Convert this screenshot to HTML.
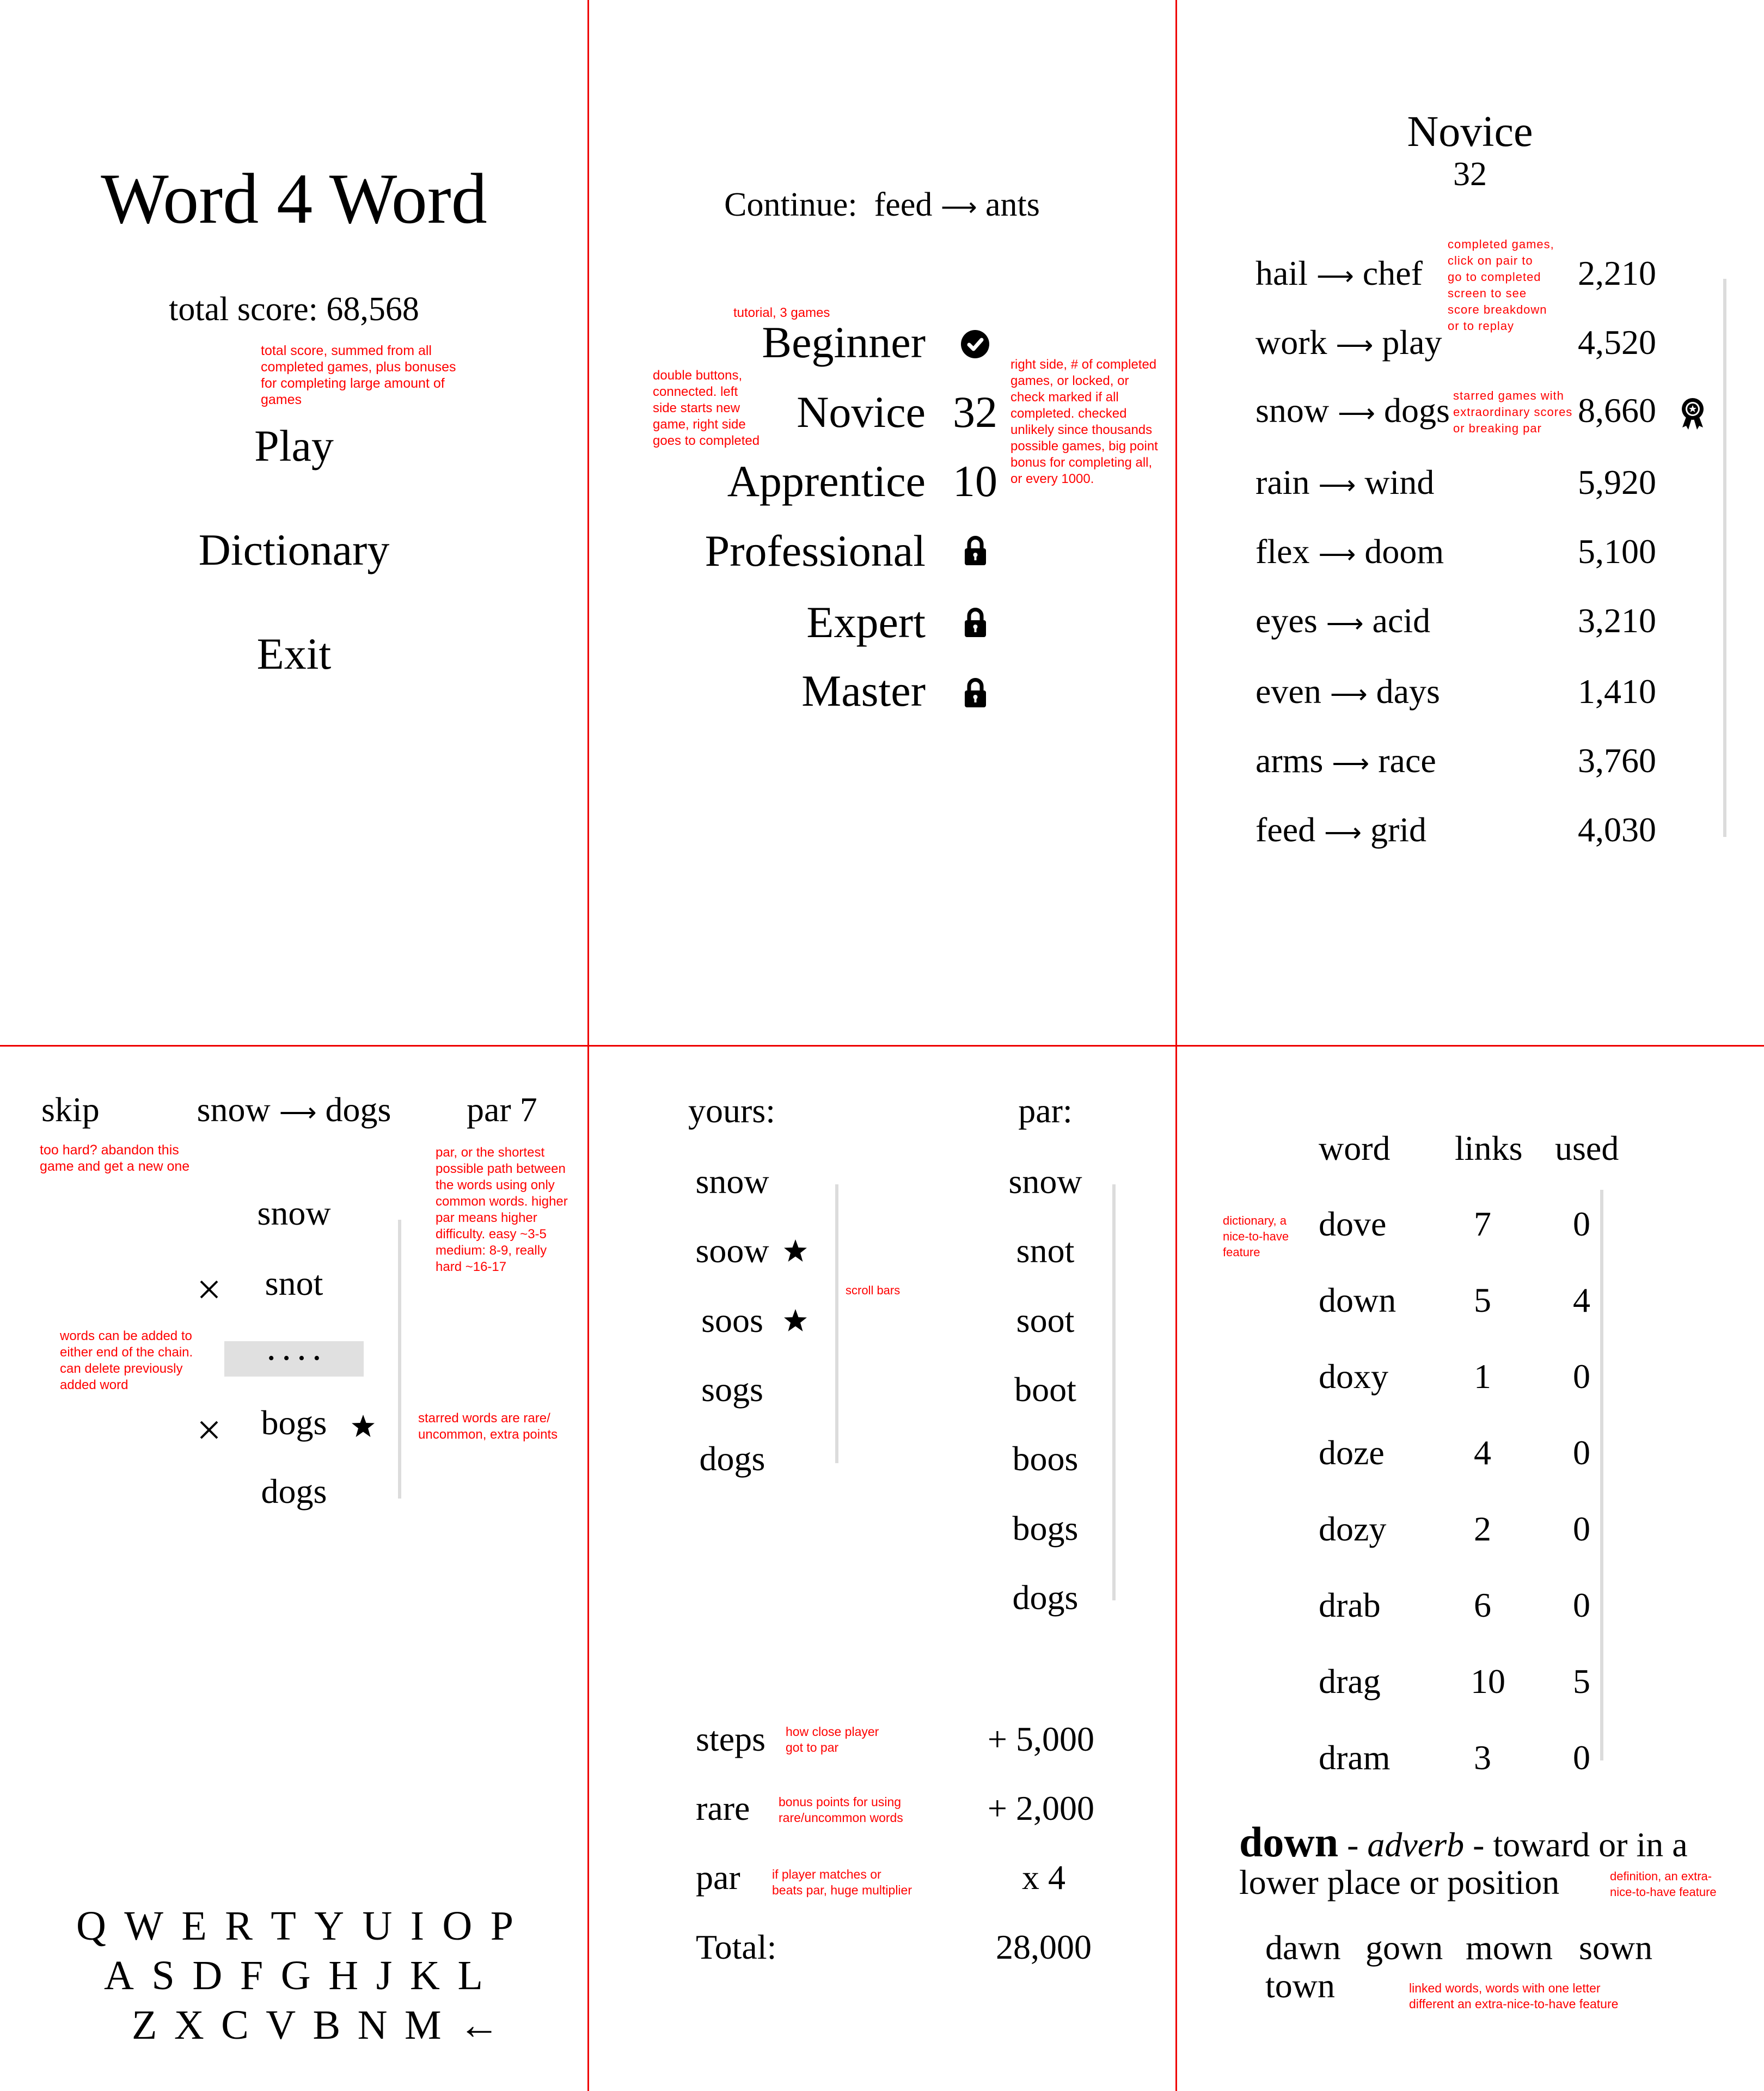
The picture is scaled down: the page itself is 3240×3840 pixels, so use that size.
<!DOCTYPE html>
<html><head><meta charset="utf-8"><style>
html,body{margin:0;padding:0}
body{width:3240px;height:3840px;position:relative;background:#fff;overflow:hidden;font-family:"Liberation Serif",serif;color:#000}
.a{position:absolute;line-height:1;white-space:nowrap}
.c{text-align:center}
.n{position:absolute;color:#f00;font-family:"Liberation Sans",sans-serif;font-size:24px;line-height:30px;white-space:nowrap}
.n2{position:absolute;color:#f00;font-family:"Liberation Sans",sans-serif;font-size:22px;line-height:30px;white-space:nowrap;letter-spacing:1px}
.n3{position:absolute;color:#f00;font-family:"Liberation Sans",sans-serif;font-size:23px;line-height:29px;white-space:nowrap}
.f64{font-size:64px}
.ar{font-family:"DejaVu Sans",sans-serif;font-size:0.75em}
.sb{position:absolute;width:6px;background:#dcdcdc}
.kb{position:absolute;display:flex;justify-content:space-between;font-size:76px;line-height:1}
</style></head><body>
<div style="position:absolute;left:1079px;top:0;width:3px;height:3840px;background:#e00"></div>
<div style="position:absolute;left:2159px;top:0;width:3px;height:3840px;background:#e00"></div>
<div style="position:absolute;left:0;top:1919px;width:3240px;height:3px;background:#e00"></div>

<!-- panel 1 -->
<div class="a c" style="left:0;width:1080px;top:299px;font-size:132px">Word 4 Word</div>
<div class="a c" style="left:0;width:1080px;top:537px;font-size:62px">total score: 68,568</div>
<div class="n" style="left:479px;top:629px;font-size:25px">total score, summed from all<br>completed games, plus bonuses<br>for completing large amount of<br>games</div>
<div class="a c" style="left:0;width:1080px;top:778px;font-size:82px">Play</div>
<div class="a c" style="left:0;width:1080px;top:969px;font-size:82px">Dictionary</div>
<div class="a c" style="left:0;width:1080px;top:1160px;font-size:82px">Exit</div>

<!-- panel 2 -->
<div class="a c" style="left:1080px;width:1080px;top:345px;font-size:62px">Continue:&nbsp; feed <span class="ar">⟶</span> ants</div>
<div class="n" style="left:1347px;top:560px">tutorial, 3 games</div>
<div class="n" style="left:1199px;top:675px">double buttons,<br>connected. left<br>side starts new<br>game, right side<br>goes to completed</div>
<div class="n" style="left:1856px;top:655px;font-size:24px">right side, # of completed<br>games, or locked, or<br>check marked if all<br>completed. checked<br>unlikely since thousands<br>possible games, big point<br>bonus for completing all,<br>or every 1000.</div>
<div class="a" style="right:1540px;top:588px;font-size:82px">Beginner</div>
<div class="a" style="right:1540px;top:716px;font-size:82px">Novice</div>
<div class="a" style="right:1540px;top:843px;font-size:82px">Apprentice</div>
<div class="a" style="right:1540px;top:971px;font-size:82px">Professional</div>
<div class="a" style="right:1540px;top:1102px;font-size:82px">Expert</div>
<div class="a" style="right:1540px;top:1228px;font-size:82px">Master</div>
<div class="a c" style="left:1731px;width:120px;top:716px;font-size:82px">32</div>
<div class="a c" style="left:1731px;width:120px;top:843px;font-size:82px">10</div>
<svg style="position:absolute;left:1765px;top:606px" width="52" height="52" viewBox="0 0 52 52"><circle cx="26" cy="26" r="26" fill="#000"/><path d="M15 27 L23 35 L38 18" stroke="#fff" stroke-width="7" fill="none" stroke-linecap="round" stroke-linejoin="round"/></svg>
<svg style="position:absolute;left:1771px;top:983px" width="41" height="56" viewBox="0 0 41 56"><path d="M9 26 V16 A11.5 11.5 0 0 1 32 16 V26" stroke="#000" stroke-width="7" fill="none"/><rect x="1" y="24" width="39" height="31" rx="4" fill="#000"/><circle cx="20.5" cy="36" r="4" fill="#fff"/><rect x="18.5" y="37" width="4" height="9" fill="#fff"/></svg>
<svg style="position:absolute;left:1771px;top:1115px" width="41" height="56" viewBox="0 0 41 56"><path d="M9 26 V16 A11.5 11.5 0 0 1 32 16 V26" stroke="#000" stroke-width="7" fill="none"/><rect x="1" y="24" width="39" height="31" rx="4" fill="#000"/><circle cx="20.5" cy="36" r="4" fill="#fff"/><rect x="18.5" y="37" width="4" height="9" fill="#fff"/></svg>
<svg style="position:absolute;left:1771px;top:1244px" width="41" height="56" viewBox="0 0 41 56"><path d="M9 26 V16 A11.5 11.5 0 0 1 32 16 V26" stroke="#000" stroke-width="7" fill="none"/><rect x="1" y="24" width="39" height="31" rx="4" fill="#000"/><circle cx="20.5" cy="36" r="4" fill="#fff"/><rect x="18.5" y="37" width="4" height="9" fill="#fff"/></svg>

<!-- panel 3 -->
<div class="a c" style="left:2160px;width:1080px;top:202px;font-size:80px">Novice</div>
<div class="a c" style="left:2160px;width:1080px;top:289px;font-size:62px">32</div>
<div class="a f64" style="left:2306px;top:470px">hail <span class="ar">⟶</span> chef</div>
<div class="a f64" style="left:2306px;top:597px">work <span class="ar">⟶</span> play</div>
<div class="a f64" style="left:2306px;top:722px">snow <span class="ar">⟶</span> dogs</div>
<div class="a f64" style="left:2306px;top:854px">rain <span class="ar">⟶</span> wind</div>
<div class="a f64" style="left:2306px;top:981px">flex <span class="ar">⟶</span> doom</div>
<div class="a f64" style="left:2306px;top:1108px">eyes <span class="ar">⟶</span> acid</div>
<div class="a f64" style="left:2306px;top:1238px">even <span class="ar">⟶</span> days</div>
<div class="a f64" style="left:2306px;top:1365px">arms <span class="ar">⟶</span> race</div>
<div class="a f64" style="left:2306px;top:1492px">feed <span class="ar">⟶</span> grid</div>
<div class="a f64" style="right:198px;top:470px">2,210</div>
<div class="a f64" style="right:198px;top:597px">4,520</div>
<div class="a f64" style="right:198px;top:722px">8,660</div>
<div class="a f64" style="right:198px;top:854px">5,920</div>
<div class="a f64" style="right:198px;top:981px">5,100</div>
<div class="a f64" style="right:198px;top:1108px">3,210</div>
<div class="a f64" style="right:198px;top:1238px">1,410</div>
<div class="a f64" style="right:198px;top:1365px">3,760</div>
<div class="a f64" style="right:198px;top:1492px">4,030</div>
<div class="n2" style="left:2659px;top:434px">completed games,<br>click on pair to<br>go to completed<br>screen to see<br>score breakdown<br>or to replay</div>
<div class="n2" style="left:2669px;top:712px">starred games with<br>extraordinary scores<br>or breaking par</div>
<svg style="position:absolute;left:3086px;top:729px" width="46" height="62" viewBox="0 0 46 62"><path d="M12 34 L4 56 L11 53 L15 60 L21 40 Z M34 34 L42 56 L35 53 L31 60 L25 40 Z" fill="#000"/><circle cx="23" cy="22" r="20" fill="#000"/><circle cx="23" cy="22" r="13" fill="#fff"/><circle cx="23" cy="22" r="10" fill="#000"/><path d="M23 15 L25 20 L30 20 L26 23 L27.5 28 L23 25 L18.5 28 L20 23 L16 20 L21 20 Z" fill="#fff"/></svg>
<div class="sb" style="left:3165px;top:512px;height:1025px"></div>

<!-- panel 4 -->
<div class="a f64" style="left:76px;top:2006px">skip</div>
<div class="a c f64" style="left:290px;width:500px;top:2006px">snow <span class="ar">⟶</span> dogs</div>
<div class="a f64" style="left:857px;top:2006px">par 7</div>
<div class="n" style="left:73px;top:2097px;font-size:25px">too hard? abandon this<br>game and get a new one</div>
<div class="n" style="left:800px;top:2102px">par, or the shortest<br>possible path between<br>the words using only<br>common words. higher<br>par means higher<br>difficulty. easy ~3-5<br>medium: 8-9, really<br>hard ~16-17</div>
<div class="a c f64" style="left:390px;width:300px;top:2196px">snow</div>
<div class="a c f64" style="left:390px;width:300px;top:2325px">snot</div>
<div style="position:absolute;left:412px;top:2463px;width:256px;height:65px;background:#e0e0e0"></div>
<div class="a c" style="left:412px;width:256px;top:2478px;font-size:34px;letter-spacing:16px;text-indent:16px">••••</div>
<div class="a c f64" style="left:390px;width:300px;top:2581px">bogs</div>
<div class="a c f64" style="left:390px;width:300px;top:2707px">dogs</div>
<svg style="position:absolute;left:366px;top:2350px" width="36" height="36" viewBox="0 0 36 36"><path d="M3 3 L33 33 M33 3 L3 33" stroke="#000" stroke-width="4"/></svg>
<svg style="position:absolute;left:366px;top:2608px" width="36" height="36" viewBox="0 0 36 36"><path d="M3 3 L33 33 M33 3 L3 33" stroke="#000" stroke-width="4"/></svg>
<svg style="position:absolute;left:645px;top:2597px" width="44" height="44" viewBox="0 0 44 44"><path d="M22 1 L27.5 16 L43 16.5 L31 26 L35.5 42 L22 32.5 L8.5 42 L13 26 L1 16.5 L16.5 16 Z" fill="#000"/></svg>
<div class="n" style="left:110px;top:2439px">words can be added to<br>either end of the chain.<br>can delete previously<br>added word</div>
<div class="n" style="left:768px;top:2590px">starred words are rare/<br>uncommon, extra points</div>
<div class="sb" style="left:731px;top:2240px;height:512px"></div>
<div class="kb" style="left:140px;width:803px;top:3499px"><span>Q</span><span>W</span><span>E</span><span>R</span><span>T</span><span>Y</span><span>U</span><span>I</span><span>O</span><span>P</span></div>
<div class="kb" style="left:191px;width:696px;top:3590px"><span>A</span><span>S</span><span>D</span><span>F</span><span>G</span><span>H</span><span>J</span><span>K</span><span>L</span></div>
<div class="kb" style="left:242px;width:676px;top:3681px"><span>Z</span><span>X</span><span>C</span><span>V</span><span>B</span><span>N</span><span>M</span><span>←</span></div>

<!-- panel 5 -->
<div class="a f64" style="left:1264px;top:2008px">yours:</div>
<div class="a c f64" style="left:1820px;width:200px;top:2008px">par:</div>
<div class="a c f64" style="left:1245px;width:200px;top:2138px">snow</div>
<div class="a c f64" style="left:1245px;width:200px;top:2265px">soow</div>
<div class="a c f64" style="left:1245px;width:200px;top:2393px">soos</div>
<div class="a c f64" style="left:1245px;width:200px;top:2520px">sogs</div>
<div class="a c f64" style="left:1245px;width:200px;top:2647px">dogs</div>
<svg style="position:absolute;left:1439px;top:2275px" width="44" height="44" viewBox="0 0 44 44"><path d="M22 1 L27.5 16 L43 16.5 L31 26 L35.5 42 L22 32.5 L8.5 42 L13 26 L1 16.5 L16.5 16 Z" fill="#000"/></svg>
<svg style="position:absolute;left:1439px;top:2403px" width="44" height="44" viewBox="0 0 44 44"><path d="M22 1 L27.5 16 L43 16.5 L31 26 L35.5 42 L22 32.5 L8.5 42 L13 26 L1 16.5 L16.5 16 Z" fill="#000"/></svg>
<div class="a c f64" style="left:1820px;width:200px;top:2138px">snow</div>
<div class="a c f64" style="left:1820px;width:200px;top:2265px">snot</div>
<div class="a c f64" style="left:1820px;width:200px;top:2393px">soot</div>
<div class="a c f64" style="left:1820px;width:200px;top:2520px">boot</div>
<div class="a c f64" style="left:1820px;width:200px;top:2647px">boos</div>
<div class="a c f64" style="left:1820px;width:200px;top:2775px">bogs</div>
<div class="a c f64" style="left:1820px;width:200px;top:2902px">dogs</div>
<div class="sb" style="left:1534px;top:2175px;height:512px"></div>
<div class="sb" style="left:2043px;top:2175px;height:764px"></div>
<div class="n" style="left:1553px;top:2355px;font-size:22px">scroll bars</div>
<div class="a f64" style="left:1278px;top:3162px">steps</div>
<div class="a f64" style="left:1278px;top:3289px">rare</div>
<div class="a f64" style="left:1278px;top:3416px">par</div>
<div class="a f64" style="left:1278px;top:3544px">Total:</div>
<div class="a f64" style="right:1230px;top:3162px">+ 5,000</div>
<div class="a f64" style="right:1230px;top:3289px">+ 2,000</div>
<div class="a c f64" style="left:1817px;width:200px;top:3416px">x 4</div>
<div class="a c f64" style="left:1817px;width:200px;top:3544px">28,000</div>
<div class="n3" style="left:1443px;top:3166px">how close player<br>got to par</div>
<div class="n3" style="left:1430px;top:3295px">bonus points for using<br>rare/uncommon words</div>
<div class="n3" style="left:1418px;top:3428px">if player matches or<br>beats par, huge multiplier</div>

<!-- panel 6 -->
<div class="a f64" style="left:2422px;top:2077px">word</div>
<div class="a f64" style="left:2672px;top:2077px">links</div>
<div class="a f64" style="left:2856px;top:2077px">used</div>
<div class="a f64" style="left:2422px;top:2216px">dove</div>
<div class="a f64" style="left:2422px;top:2356px">down</div>
<div class="a f64" style="left:2422px;top:2496px">doxy</div>
<div class="a f64" style="left:2422px;top:2636px">doze</div>
<div class="a f64" style="left:2422px;top:2776px">dozy</div>
<div class="a f64" style="left:2422px;top:2916px">drab</div>
<div class="a f64" style="left:2422px;top:3056px">drag</div>
<div class="a f64" style="left:2422px;top:3196px">dram</div>
<div class="a c f64" style="left:2663px;width:120px;top:2216px">7</div>
<div class="a c f64" style="left:2663px;width:120px;top:2356px">5</div>
<div class="a c f64" style="left:2663px;width:120px;top:2496px">1</div>
<div class="a c f64" style="left:2663px;width:120px;top:2636px">4</div>
<div class="a c f64" style="left:2663px;width:120px;top:2776px">2</div>
<div class="a c f64" style="left:2663px;width:120px;top:2916px">6</div>
<div class="a c f64" style="left:2673px;width:120px;top:3056px">10</div>
<div class="a c f64" style="left:2663px;width:120px;top:3196px">3</div>
<div class="a c f64" style="left:2845px;width:120px;top:2216px">0</div>
<div class="a c f64" style="left:2845px;width:120px;top:2356px">4</div>
<div class="a c f64" style="left:2845px;width:120px;top:2496px">0</div>
<div class="a c f64" style="left:2845px;width:120px;top:2636px">0</div>
<div class="a c f64" style="left:2845px;width:120px;top:2776px">0</div>
<div class="a c f64" style="left:2845px;width:120px;top:2916px">0</div>
<div class="a c f64" style="left:2845px;width:120px;top:3056px">5</div>
<div class="a c f64" style="left:2845px;width:120px;top:3196px">0</div>
<div class="sb" style="left:2939px;top:2185px;height:1048px"></div>
<div class="n3" style="left:2246px;top:2227px;font-size:22px">dictionary, a<br>nice-to-have<br>feature</div>
<div style="position:absolute;left:2276px;top:3344px;display:flex;align-items:baseline;line-height:1;white-space:nowrap">
<span style="font-size:78px;font-weight:bold">down</span><span style="font-size:64px">&nbsp;- <i>adverb</i> - toward or in a</span></div>
<div class="a" style="left:2276px;top:3425px;font-size:64px">lower place or position</div>
<div class="n3" style="left:2957px;top:3431px;font-size:22px">definition, an extra-<br>nice-to-have feature</div>
<div class="a" style="left:2324px;top:3545px;font-size:64px">dawn</div>
<div class="a" style="left:2508px;top:3545px;font-size:64px">gown</div>
<div class="a" style="left:2692px;top:3545px;font-size:64px">mown</div>
<div class="a" style="left:2900px;top:3545px;font-size:64px">sown</div>
<div class="a" style="left:2324px;top:3615px;font-size:64px">town</div>
<div class="n3" style="left:2588px;top:3637px;font-size:23px">linked words, words with one letter<br>different an extra-nice-to-have feature</div>
</body></html>
